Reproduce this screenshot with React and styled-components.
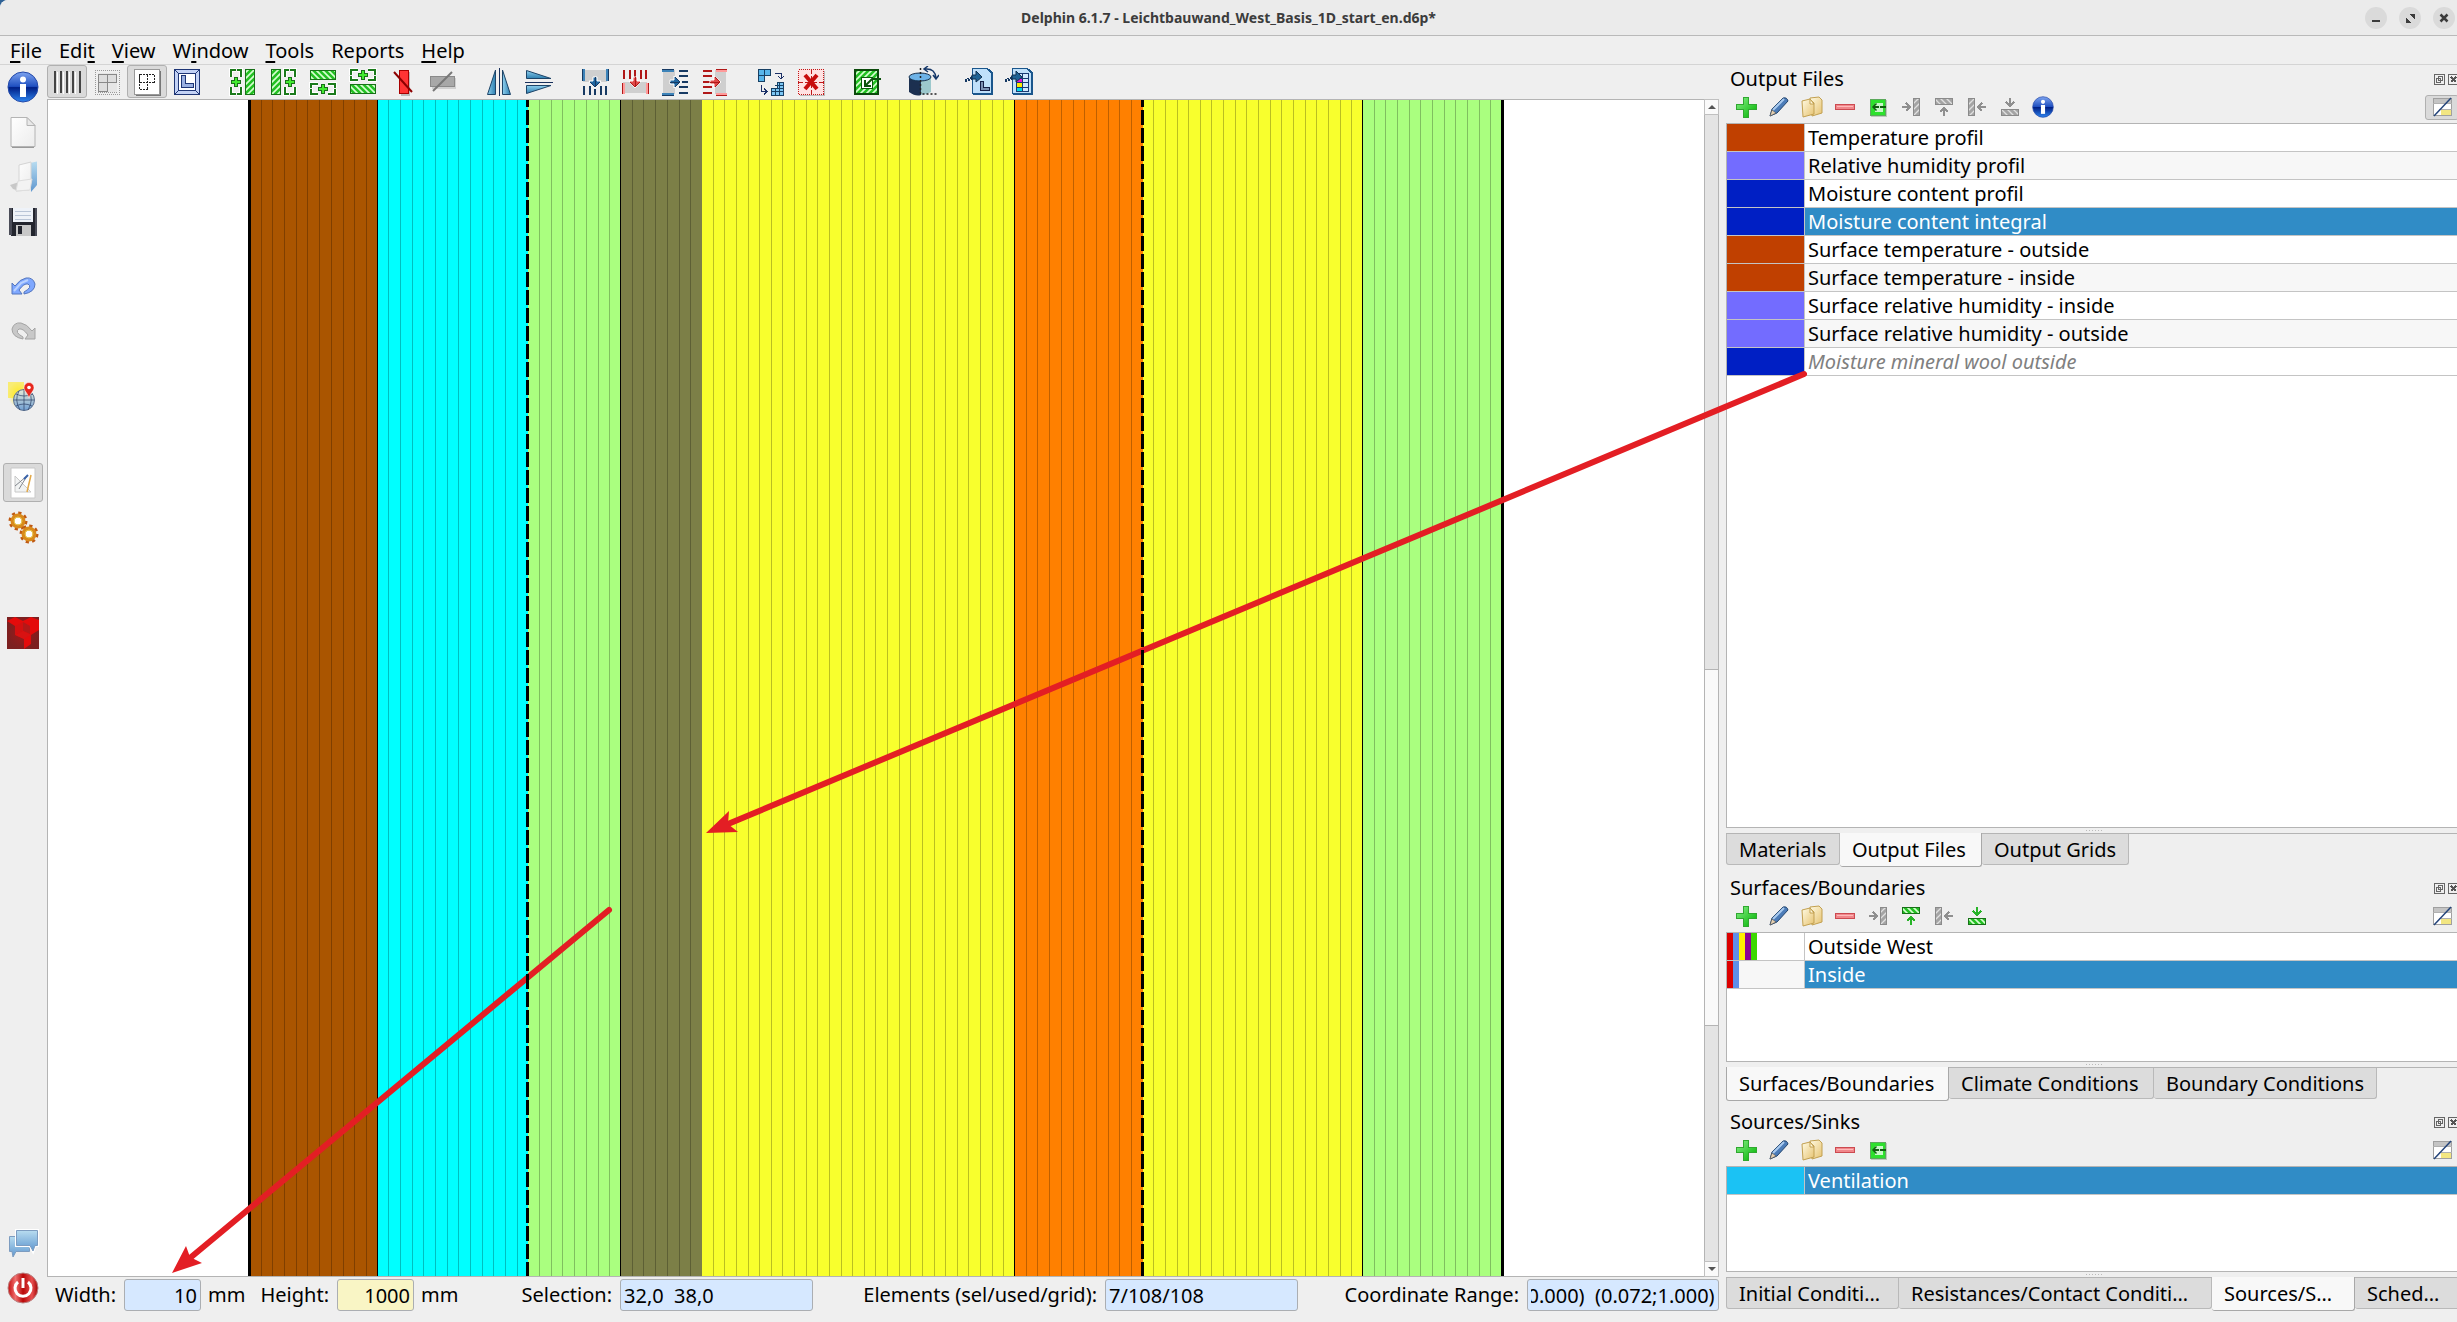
import React, { useEffect, useRef, useState } from 'react';
import styled, { createGlobalStyle, css } from 'styled-components';

const GlobalStyle = createGlobalStyle`
  * {
    box-sizing: border-box;
  }

  body {
    margin: 0;
    background: #2f6296;
    overflow: hidden;
  }

  body, button, input {
    font-family: "Noto Sans", "Open Sans", sans-serif;
    font-size: 20px;
    line-height: 26px;
    color: #000;
  }
`;

const Window = styled.div`
  position: relative;
  display: flex;
  flex-direction: column;
  height: 100vh;
  background: #efefef;
  border-top-left-radius: 8px;
  overflow: hidden;
`;

const TitleBar = styled.header`
  display: grid;
  grid-template-columns: 1fr auto 1fr;
  align-items: center;
  height: 36px;
  background: #ebebeb;
  border-bottom: 1px solid #b9b9b9;
`;

const Title = styled.h1`
  grid-column: 2;
  margin: 0;
  font-size: 14px;
  font-weight: 700;
  color: #3c3c3c;
`;

const WindowButtons = styled.div`
  display: flex;
  justify-content: flex-end;
  gap: 12px;
  padding-right: 2px;
`;

const WindowButton = styled.button`
  display: flex;
  width: 22px;
  height: 22px;
  padding: 0;
  border: 0;
  border-radius: 50%;
  background: #dadada;
`;

const MenuBar = styled.nav`
  display: flex;
  gap: 17px;
  height: 29px;
  padding: 1px 10px 0;
  border-bottom: 1px solid #d4d4d4;
`;

const MenuItem = styled.button`
  padding: 0;
  border: 0;
  background: none;

  u {
    text-decoration-thickness: 2px;
    text-underline-offset: 3px;
  }
`;

const Body = styled.div`
  display: grid;
  grid-template-columns: 47px minmax(0, 1fr) 731px;
  flex: 1;
  min-height: 0;
`;

const SideBar = styled.aside`
  display: flex;
  flex-direction: column;
  align-items: center;
  gap: 6px;
  padding: 2px 2px 15px 0;
`;

const Gap = styled.div`
  height: ${props => props.$size}px;
`;

const Spring = styled.div`
  flex: 1;
`;

const ToolButton = styled.button`
  display: flex;
  flex: none;
  align-items: center;
  justify-content: center;
  width: ${props => props.$width || 40}px;
  height: ${props => props.$height || 33}px;
  padding: 0;
  border: 1px solid transparent;
  border-radius: 3px;
  background: none;

  ${props => props.$pressed && css`
    border-color: #b0b0b0;
    background: #dadada;
  `}
`;

const Center = styled.main`
  display: flex;
  flex-direction: column;
  min-width: 0;
`;

const ToolBar = styled.div`
  display: flex;
  height: 34px;
`;

const ToolGap = styled.div`
  width: 16px;
`;

const Viewport = styled.div`
  display: flex;
  flex: 1;
  min-height: 0;
  margin-right: 7px;
  border: 1px solid #b4b4b4;
  background: #fff;
`;

const Construction = styled.div`
  display: flex;
  flex: 1;
  padding: 0 202px;
`;

const Layer = styled.div`
  position: relative;
  display: flex;
  flex: ${props => props.$cells} 0 0;
  background: ${props => props.$color};
  box-shadow: ${props => (props.$edge === 'solid' ? 'inset -1px 0 #000' : 'none')};

  &:first-child {
    box-shadow: -2px 0 #000, inset -1px 0 #000, inset 1px 0 #000;
  }

  &:last-child {
    box-shadow: 2px 0 #000, inset -1px 0 #000;
  }

  ${props => props.$edge === 'dashed' && css`
    &::after {
      content: '';
      position: absolute;
      z-index: 1;
      top: 0;
      bottom: 0;
      right: -1px;
      width: 3px;
      background: repeating-linear-gradient(#000 0 7px, transparent 7px 10px, #000 10px 18px);
    }
  `}
`;

const Cell = styled.div`
  flex: 1;

  & + & {
    border-left: 1px solid rgba(0, 0, 0, 0.25);
  }
`;

const ScrollBar = styled.div`
  display: flex;
  flex-direction: column;
  width: 14px;
  border-left: 1px solid #b4b4b4;
  background: #e4e4e4;
`;

const ScrollButton = styled.button`
  display: flex;
  align-items: center;
  justify-content: center;
  height: 14px;
  padding: 0;
  border: 0;
  background: #fafafa;
  box-shadow: 0 0 0 1px #c0c0c0;
`;

const ScrollTrack = styled.div`
  display: grid;
  grid-template-rows: 555fr 357fr 236fr;
  flex: 1;
`;

const ScrollThumb = styled.div`
  grid-row: 2;
  border: solid #b4b4b4;
  border-width: 1px 0;
  background: #f9f9f9;
`;

const StatusBar = styled.footer`
  display: flex;
  height: 45px;
  padding: 2px 7px 0 0;
`;

const StatusLabel = styled.label`
  width: ${props => props.$width}px;
  padding-right: 8px;
  line-height: 32px;
  text-align: right;
  white-space: nowrap;
`;

const Unit = styled.span`
  width: 42px;
  padding-left: 7px;
  line-height: 32px;
`;

const Field = styled.input`
  width: ${props => props.$width}px;
  height: 32px;
  padding: 1px 3px 0;
  border: 1px solid #abaeb2;
  border-radius: 3px;
  outline: 0;
  background: ${props => (props.$yellow ? '#f9f5c5' : '#d6e8ff')};
  text-align: ${props => (props.$end ? 'right' : 'left')};
`;

const Docks = styled.aside`
  display: flex;
  flex-direction: column;
  gap: 8px;
  margin-right: -5px;
  padding-bottom: 12px;
`;

const Dock = styled.section`
  display: flex;
  flex-direction: column;
  flex: ${props => (props.$grow ? 1 : 'none')};
`;

const DockTitle = styled.div`
  display: flex;
  align-items: center;
  height: 28px;
  padding: 0 3px 0 4px;

  h2 {
    flex: 1;
    margin: 0;
    font-size: 20px;
    font-weight: 400;
  }
`;

const DockControl = styled.button`
  display: flex;
  width: 11px;
  height: 11px;
  margin-left: 3px;
  padding: 0;
  border: 0;
  background: none;
`;

const DockTools = styled.div`
  display: flex;
  align-items: center;
  height: 30px;
  padding: 0 3px 2px 3px;
`;

const ListBox = styled.div`
  flex: 1;
  min-height: ${props => props.$height}px;
  border: 1px solid #b4b4b4;
  background: #fff;
`;

const List = styled.table`
  width: 100%;
  border-spacing: 0;
  table-layout: fixed;
`;

const Swatch = styled.td`
  width: 78px;
  height: 28px;
  padding: 0;
  border-right: 1px solid #c4c4c4;
  border-bottom: 1px solid #c4c4c4;
  background: ${props => props.$color};
`;

const Stripes = styled.div`
  display: flex;
  height: 27px;
`;

const Stripe = styled.i`
  width: 6px;
  background: ${props => props.$color};
`;

const Name = styled.td`
  padding: 1px 3px 0;
  border-bottom: 1px solid #c4c4c4;
  background: ${props => (props.$alt ? '#f7f7f7' : '#fff')};
  line-height: 26px;
  white-space: nowrap;

  ${props => props.$selected && css`
    background: #308cc6;
    color: #fff;
  `}

  ${props => props.$inactive && css`
    color: #808080;
    font-style: italic;
  `}
`;

const Handle = styled.div`
  width: 17px;
  height: 1px;
  margin: 2px auto;
  background: repeating-linear-gradient(90deg, #bbb 0 1px, transparent 1px 3px);
`;

const Tabs = styled.div`
  display: flex;
  align-items: flex-start;
  height: 33px;
  border-top: 1px solid #b4b4b4;
`;

const Tab = styled.button`
  flex: none;
  width: ${props => props.$width}px;
  height: 31px;
  padding: 1px 0 0 12px;
  border: 1px solid #b9b9b9;
  border-top: 0;
  border-radius: 0 0 3px 3px;
  background: #dcdcdc;
  text-align: left;
  white-space: nowrap;

  & + & {
    border-left-width: 0;
  }

  ${props => props.$selected && css`
    height: 34px;
    margin-top: -1px;
    background: #f8f8f8;
    border-color: #a8a8a8;
  `}
`;

const Annotations = styled.svg`
  position: absolute;
  inset: 0;
  width: 100%;
  height: 100%;
  pointer-events: none;
`;

const Icon = ({ size = 28, box = 28, smooth, children }) => (
  <svg
    width={size}
    height={size}
    viewBox={`0 0 ${box} ${box}`}
    fill="none"
    shapeRendering={smooth ? 'auto' : 'crispEdges'}
    aria-hidden="true"
  >
    {children}
  </svg>
);

const DefsHolder = styled.svg`
  position: absolute;
`;

const SharedDefs = () => (
  <DefsHolder width="0" height="0" aria-hidden="true">
    <defs>
      <pattern id="hatch" width="6" height="6" patternUnits="userSpaceOnUse">
        <rect width="6" height="6" fill="#22c022" />
        <path d="M-1 4L4 -1M2 7L7 2" stroke="#d6ffd0" strokeWidth="1.6" shapeRendering="auto" />
      </pattern>
      <pattern id="hatchGrey" width="6" height="6" patternUnits="userSpaceOnUse">
        <rect width="6" height="6" fill="#a4a4a4" />
        <path d="M-1 4L4 -1M2 7L7 2" stroke="#e0e0e0" strokeWidth="1.3" />
      </pattern>
      <linearGradient id="blueOrb" x1="0" y1="0" x2="0" y2="1">
        <stop offset="0" stopColor="#7ea4f0" />
        <stop offset="0.48" stopColor="#1f4fc0" />
        <stop offset="0.52" stopColor="#001f86" />
        <stop offset="1" stopColor="#2e86f0" />
      </linearGradient>
      <linearGradient id="redOrb" x1="0" y1="0" x2="1" y2="0">
        <stop offset="0" stopColor="#c40c0c" />
        <stop offset="0.25" stopColor="#f07070" />
        <stop offset="0.5" stopColor="#b80808" />
        <stop offset="0.8" stopColor="#e85050" />
        <stop offset="1" stopColor="#a00000" />
      </linearGradient>
      <linearGradient id="sky" x1="0" y1="0" x2="0" y2="1">
        <stop offset="0" stopColor="#b8dcf0" />
        <stop offset="1" stopColor="#5f97cf" />
      </linearGradient>
      <linearGradient id="steel" x1="0" y1="0" x2="1" y2="0">
        <stop offset="0" stopColor="#8fd0ee" />
        <stop offset="1" stopColor="#2d7fb0" />
      </linearGradient>
      <linearGradient id="paper" x1="0" y1="0" x2="1" y2="1">
        <stop offset="0" stopColor="#fff" />
        <stop offset="1" stopColor="#ececec" />
      </linearGradient>
      <linearGradient id="folder" x1="0" y1="0" x2="1" y2="1">
        <stop offset="0" stopColor="#fffbe4" />
        <stop offset="1" stopColor="#e6c270" />
      </linearGradient>
      <linearGradient id="green" x1="0" y1="0" x2="1" y2="1">
        <stop offset="0" stopColor="#8cf08c" />
        <stop offset="1" stopColor="#00b400" />
      </linearGradient>
      <linearGradient id="globe" x1="0" y1="0" x2="0" y2="1">
        <stop offset="0" stopColor="#e8ecd8" />
        <stop offset="1" stopColor="#6f9fd4" />
      </linearGradient>
      <radialGradient id="sun">
        <stop offset="0" stopColor="#ffe920" />
        <stop offset="1" stopColor="#ffe920" stopOpacity="0" />
      </radialGradient>
      <radialGradient id="brand">
        <stop offset="0" stopColor="#a01818" />
        <stop offset="1" stopColor="#7c2020" />
      </radialGradient>
    </defs>
  </DefsHolder>
);

// --- side bar icons, 32 x 32 ---

const InfoIcon = ({ size = 32 }) => (
  <Icon size={size} box={32} smooth>
    <circle cx="16" cy="16" r="15" fill="url(#blueOrb)" stroke="#2348a8" />
    <circle cx="16" cy="8.5" r="3" fill="#fff" />
    <path d="M13 13h6v13h-6z" fill="#fff" />
  </Icon>
);

const NewIcon = () => (
  <Icon size={32} box={32} smooth>
    <path d="M4 1.500H20L28 9.500V30.500H4Z" fill="url(#paper)" stroke="#b4b4b4" />
    <path d="M20 1.500V9.500H28Z" fill="#e8e8e8" stroke="#b4b4b4" />
    <path d="M5 31.500H27" stroke="#999" />
  </Icon>
);

const OpenIcon = () => (
  <Icon size={32} box={32} smooth>
    <path d="M3 24L12 21V30L6 28Z" fill="#c8c8c8" />
    <path d="M23 2L30 0.500V24L24 31Z" fill="url(#sky)" />
    <path d="M12 4L24 1V19L22 29L9 30L12 20Z" fill="url(#paper)" stroke="#d4d4d4" />
    <path d="M9 30L11 20L25 18L23 29Z" fill="#f3f3f3" stroke="#ddd" />
  </Icon>
);

const SaveIcon = () => (
  <Icon size={32} box={32}>
    <path d="M2 2H30V30H4L2 28Z" fill="#23252e" />
    <path d="M2 2H5V29H2ZM28 2H30V30H28Z" fill="#4a4c58" />
    <path d="M6 2H26V16H6Z" fill="#eef2f8" />
    <path d="M8 5H24M8 9H24M8 13H24" stroke="#b8c4d6" />
    <path d="M9 19H24V30H9Z" fill="#c8c8c8" />
    <path d="M11 20H15V28H11Z" fill="#23252e" />
  </Icon>
);

const UndoIcon = () => (
  <Icon size={32} box={32} smooth>
    <path
      d="M5 12V23H15L12 19Q17 12 21 13Q26 16 17 21V23Q28 21 28 13Q26 6 19 7Q13 8 8 15Z"
      fill="#7fa8ff"
      stroke="#5576bd"
    />
    <path d="M7 20L14 12L21 9" stroke="#b9d2ff" strokeWidth="2" />
  </Icon>
);

const RedoIcon = () => (
  <Icon size={32} box={32} smooth>
    <path
      d="M28 12V23H18L21 19Q16 12 12 13Q7 16 16 21V23Q5 21 5 13Q7 6 14 7Q20 8 25 15Z"
      fill="#c8c8c8"
      stroke="#a4a4a4"
    />
  </Icon>
);

const ClimateIcon = () => (
  <Icon size={32} box={32} smooth>
    <path d="M1 1H22V27H1Z" fill="url(#sun)" />
    <path d="M1 1H17V17H1Z" fill="#ffe920" opacity="0.6" />
    <circle cx="17" cy="19" r="10.500" fill="url(#globe)" stroke="#5b6f8e" />
    <path
      d="M7 19H27M9 13Q17 17 26 13M9 25Q17 21 25 25M17 8.500V29.500M12 10Q7 19 13 29M22 10Q27 19 21 29"
      stroke="#2b3f66"
      strokeWidth="0.700"
    />
    <path d="M22 17C20 11 17 10 17 6.500A5 5 0 0 1 27 6.500C27 10 24 11 22 17Z" fill="#e6281e" stroke="#fff" strokeWidth="0.500" />
    <circle cx="22" cy="6.500" r="1.800" fill="#fff" />
  </Icon>
);

const DesignIcon = () => (
  <Icon size={32} box={32} smooth>
    <path d="M4 1H28V31H4Z" fill="#fff" stroke="#c9c9c9" />
    <path d="M8 9V25H24Z" fill="#f1f3f3" stroke="#c8c8c8" />
    <path d="M8 19L20 9M12 22L20 9" stroke="#80858c" />
    <path d="M17 12L21 8" stroke="#3b64aa" strokeWidth="2" />
    <path d="M24 8L20 25" stroke="#e2a848" strokeWidth="1.500" />
  </Icon>
);

const GearsIcon = () => (
  <Icon size={34} box={34} smooth>
    {[[12, 10], [23, 23]].map(([x, y]) => (
      <g key={x}>
        <circle cx={x} cy={y} r="8" stroke="#bf5a14" strokeWidth="3" strokeDasharray="3.140 3.140" />
        <circle cx={x} cy={y} r="5.500" fill="#fff" stroke="#d98a1c" strokeWidth="4" />
        <circle cx={x} cy={y} r="4" stroke="#e8c850" />
      </g>
    ))}
  </Icon>
);

const BrandIcon = () => (
  <Icon size={32} box={32} smooth>
    <path d="M0 0H32V32H0Z" fill="url(#brand)" />
    <path d="M0 4L8 0L16 4L24 0L32 3V13L24 18V27L17 32V22L8 18V9Z" fill="#e40b0b" />
    <path d="M8 9L16 5V15L8 18Z" fill="#d41010" />
    <path d="M16 5L23 9V17L16 14Z" fill="#b41818" />
    <path d="M9 18L16 14L24 18L17 22Z" fill="#d81212" />
  </Icon>
);

const ChatIcon = () => (
  <Icon size={32} box={32} smooth>
    <path d="M2.500 9.500H22.500V24.500H9L6 30L5 24.500H2.500Z" fill="url(#sky)" stroke="#7d9cc0" />
    <path d="M9.500 3.500H30.500V18.500H28L26 24L23 18.500H9.500Z" fill="url(#sky)" stroke="#fff" strokeWidth="3" />
    <path d="M9.500 3.500H30.500V18.500H28L26 24L23 18.500H9.500Z" fill="url(#sky)" stroke="#7d9cc0" />
  </Icon>
);

const PowerIcon = () => (
  <Icon size={32} box={32} smooth>
    <circle cx="16" cy="16" r="15" fill="url(#redOrb)" stroke="#b98080" />
    <path d="M11 10A8 8 0 1 0 21 10" stroke="#fff" strokeWidth="3" />
    <path d="M16 6V16" stroke="#fff" strokeWidth="3" />
  </Icon>
);

// --- geometry tool bar icons, 28 x 28 ---

const GridIcon = () => (
  <Icon>
    <path d="M2 3V25M8 3V25M14 3V25M20 3V25M27 3V25" stroke="#444" strokeWidth="2" />
    <path d="M4 4V26M10 4V26M16 4V26M22 4V26" stroke="#fff" />
  </Icon>
);

const CellsIcon = () => (
  <Icon>
    <path d="M2 2.500H27M2 26.500H27M2.500 2V27M26.500 2V27M5 5.500H25M5 24.500H25" stroke="#999" strokeDasharray="1 1" />
    <path d="M5 5H24V24H5Z" fill="#e6e6e6" />
    <path d="M5.500 6.500H14.500V14.500H5.500ZM14.500 6.500H23.500V14.500H14.500ZM5.500 14.500H14.500V23.500H5.500Z" fill="#ddd" stroke="#888" />
  </Icon>
);

const SelectionIcon = () => (
  <Icon>
    <path d="M3 3H28V28H3Z" fill="#777" />
    <path d="M1.500 1.500H26.500V26.500H1.500Z" fill="#fff" stroke="#999" />
    <path d="M6.500 6.500H21.500V14.500H6.500ZM14.500 6.500V21.500H6.500V6.500" stroke="#222" strokeDasharray="2 1" />
  </Icon>
);

const DetailIcon = () => (
  <Icon>
    <path d="M1.500 1.500H26.500V26.500H1.500Z" fill="#c3d2f5" stroke="#1e3575" />
    <path d="M5.500 5.500H22.500V22.500H5.500Z" fill="#fff" stroke="#1e3575" />
    <path d="M1 1L5 5M27 1L23 5M1 27L5 23M27 27L23 23" stroke="#1e3575" />
    <path d="M8.500 7.500H12.500V15.500H20.500V19.500H8.500Z" fill="#9ab0e0" stroke="#1e3575" />
  </Icon>
);

const insertTurns = { left: 0, right: 180, above: 270, below: 90 };

const InsertIcon = ({ side }) => (
  <Icon>
    <g transform={`rotate(${insertTurns[side]} 14 14)`}>
      <path d="M16.500 1.500H25.500V26.500H16.500Z" fill="url(#hatch)" stroke="#187018" />
      <path d="M7 2H2V9M8 2H12V9M2 19V26H7M12 19V26H8" stroke="#fff" strokeWidth="4" />
      <path d="M7 2H2V9M8 2H12V9M2 19V26H7M12 19V26H8" stroke="#1b7a1b" strokeWidth="2" />
      <path d="M7 9V19M2 14H12" stroke="#187018" strokeWidth="4" />
      <path d="M7 10V18M3 14H11" stroke="#42ea30" strokeWidth="2" />
    </g>
  </Icon>
);

const RemoveColumnIcon = () => (
  <Icon>
    <path d="M12 4H21V28H12Z" fill="#bbb" />
    <path d="M10.500 2.500H19.500V25.500H10.500Z" fill="#ff3434" stroke="#a80000" />
    <path d="M5 4L23 24" stroke="#8c0000" strokeWidth="2" shapeRendering="auto" />
  </Icon>
);

const RemoveRowIcon = () => (
  <Icon>
    <path d="M3 10H27V21H3Z" fill="#d0d0d0" />
    <path d="M1.500 8.500H25.500V18.500H1.500Z" fill="#a8a8a8" stroke="#8a8a8a" />
    <path d="M4 23L23 4" stroke="#777" strokeWidth="2" shapeRendering="auto" />
  </Icon>
);

const FlipIcon = ({ turn = 0 }) => (
  <Icon>
    <g transform={`rotate(${turn} 14 14)`}>
      <path d="M10.500 2V26.500H2.500Z" fill="url(#steel)" stroke="#1d4468" shapeRendering="auto" />
      <path d="M17.500 2V26.500H25.500Z" fill="url(#steel)" stroke="#1d4468" shapeRendering="auto" />
      <path d="M14.500 0V28" stroke="#18305c" />
    </g>
  </Icon>
);

const SplitIcon = ({ color = '#173a63', light = '#3d83b8', arrow = '#1f66a0', turn = 0, down }) => (
  <Icon>
    <g transform={`rotate(${turn} 14 14)`}>
      <path d={down ? 'M2 14H26V25H2Z' : 'M2 2H26V14H2Z'} fill="#cfcfcf" />
      <path d={down ? 'M3 2V11M9 2V11M14 2V11M20 2V11M25 2V11' : 'M3 18V27M9 18V27M14 21V27M20 18V27M25 18V27'} stroke={color} strokeWidth="2" />
      <path d={down ? 'M2 15V26M26 15V26' : 'M2 1V13M26 1V13'} stroke={light} strokeWidth="3" />
      <path d={down ? 'M1 15V26M27 15V26' : 'M1 1V13M27 1V13'} stroke={color} />
      <path d="M12 9H16V13H20L14 20L8 13H12Z" fill={arrow} stroke="#fff" shapeRendering="auto" />
      <path d="M14 9V19M9 14L14 19L19 14" stroke={color} />
    </g>
  </Icon>
);

const RefineIcon = () => (
  <Icon>
    <path d="M1.500 1.500H13.500V7.500H7.500V13.500H1.500Z" fill="#58b5ea" stroke="#174064" />
    <path d="M7.500 1.500V7.500H1.500" stroke="#174064" />
    <path d="M14.500 20.500H20.500V14.500H26.500V27H14.500Z" fill="#7bc6f4" stroke="#174064" />
    <path d="M14 23.500H27M18 17.500H27M20.500 20.500H27M18.500 20V27M22.500 14V27" stroke="#174064" />
    <path d="M18 5.500H24V11M21 8L24 11L27 8M4 17V23.500H10M7 20.500L10 23.500L7 26.500" stroke="#1b2f66" />
  </Icon>
);

const DeleteSelectionIcon = () => (
  <Icon>
    <path d="M3 3H28V28H3Z" fill="#bbb" />
    <path d="M1 1H27V27H1Z" fill="#ffe2e2" />
    <path d="M1.500 1.500H26.500V26.500H1.500Z" stroke="#c01818" strokeDasharray="1 1" />
    <path d="M14.500 1V27M1 14.500H27" stroke="#c01818" strokeDasharray="5 2" />
    <path d="M8 7L20 21M20 7L8 21" stroke="#c80c0c" strokeWidth="4" shapeRendering="auto" />
  </Icon>
);

const AssignIcon = () => (
  <Icon>
    <path d="M2 2H25V26H2Z" fill="url(#hatch)" stroke="#0b4a0b" strokeWidth="2" />
    <path d="M8 9H19V20H8Z" fill="#fff" stroke="#0b5c0b" />
    <path d="M28 11H19L12 18M12 12V18H18" stroke="#0c540c" strokeWidth="2" shapeRendering="auto" />
  </Icon>
);

const RotationIcon = () => (
  <Icon size={32} box={32} smooth>
    <path d="M2 12V26Q9 31 14 29V11Z" fill="#1c3050" />
    <path d="M14 11H24V26Q19 29 14 29Z" fill="#9cc8cc" />
    <ellipse cx="13" cy="11" rx="11" ry="4" fill="#6db2e6" stroke="#17304c" />
    <path d="M13.500 2V28H31" stroke="#222" strokeWidth="1.500" strokeDasharray="2 2" />
    <path d="M18 3Q28 2 29 12M21 0L17 3L21 6M26 9L29 13L32 9" stroke="#17396a" strokeWidth="1.500" />
  </Icon>
);

const CopyToIcon = ({ table }) => (
  <Icon size={30} box={30}>
    <path d="M9 2H25L29 6V28H9Z" fill="#1a568c" />
    <path d="M8.500 1.500H23L27.500 6V26.500H8.500Z" fill="#bfe0fa" stroke="#1a568c" />
    {table ? (
      <>
        <path d="M12.500 6.500H24.500V24.500H12.500Z" fill="#cfe8fc" stroke="#173a70" />
        <path d="M13 11H18V16H13Z" fill="#e815d8" />
        <path d="M13 16H18V20H13Z" fill="#ffe800" />
        <path d="M13 20H18V24H13Z" fill="#00d8e8" />
        <path d="M12 11.500H25M12 15.500H25M12 20.500H25M18.500 6V25" stroke="#173a70" />
      </>
    ) : (
      <path d="M16.500 14.500H19.500V20.500H25.500V23.500H16.500Z" fill="#7d92b4" stroke="#141e44" />
    )}
    <path d="M1 14L10 10" stroke="#173a63" strokeWidth="3" strokeDasharray="2 1" />
    <path d="M8 8H12V4L18 10L12 15V12H8Z" fill="#1e6294" stroke="#103050" shapeRendering="auto" />
  </Icon>
);

// --- dock tool bar icons, 22 x 22 ---

const AddIcon = () => (
  <Icon size={22} box={22}>
    <path d="M8 1H13V8H21V13H13V21H8V13H1V8H8Z" fill="url(#green)" stroke="#2fa82f" />
  </Icon>
);

const EditIcon = () => (
  <Icon size={22} box={22} smooth>
    <path d="M2 20L4 13L15 2Q19 1 20 5L9 17Z" fill="#4c7cb8" stroke="#25466e" />
    <path d="M5 14L16 3" stroke="#a9caee" strokeWidth="2" />
    <path d="M2 20L4 14L8 17Z" fill="#e6d0b0" stroke="#444" strokeWidth="0.500" />
  </Icon>
);

const DuplicateIcon = () => (
  <Icon size={22} box={22} smooth>
    <path d="M9 2L18 1L21 4V17L11 20Z" fill="url(#folder)" stroke="#c2a050" />
    <path d="M1 5L9 3L13 7V18L2 21Z" fill="url(#folder)" stroke="#c2a050" />
    <path d="M9 3V8H13Z" fill="#fff8dc" stroke="#c2a050" />
  </Icon>
);

const DeleteIcon = () => (
  <Icon size={22} box={22}>
    <path d="M1.500 8.500H20.500V13.500H1.500Z" fill="#f0868a" stroke="#cc4a50" />
    <path d="M3 10.500H19" stroke="#ffb8b8" />
  </Icon>
);

const PickIcon = () => (
  <Icon size={22} box={22}>
    <path d="M4 4H20V21H4Z" fill="#bcc8bc" />
    <path d="M3 3H18V19H3Z" fill="#2de02d" stroke="#5ba95b" />
    <path d="M8 7H16V16H8Z" fill="#c9f7c9" />
    <path d="M9.500 7.500L6 11L9.500 14.500" stroke="#0f5f0f" strokeWidth="1.500" shapeRendering="auto" />
    <path d="M6 11H19" stroke="#0f5f0f" strokeWidth="2" strokeDasharray="6 1" />
  </Icon>
);

const EdgeIcon = ({ turn = 0, active }) => (
  <Icon size={22} box={22}>
    <g transform={`rotate(${turn} 11 11)`}>
      <path
        d="M13.500 2.500H19.500V19.500H13.500Z"
        fill={active ? 'url(#hatch)' : 'url(#hatchGrey)'}
        stroke={active ? '#187018' : '#8a8a8a'}
      />
      <path d="M2 11H10M6 7L10 11L6 15" stroke={active ? '#28b428' : '#8f8f8f'} strokeWidth="2" />
    </g>
  </Icon>
);

const TableViewIcon = () => (
  <Icon size={22} box={22}>
    <path d="M2.500 2.500H20.500V19.500H2.500Z" fill="#fff" stroke="#a0a0a0" />
    <path d="M3 3H20V7H3Z" fill="#c4c4c4" />
    <path d="M10 13H20V19H10Z" fill="#f2e682" />
    <path d="M2 7.500H21M8 13.500H21" stroke="#b0b0b0" />
    <path d="M3 20L20 2" stroke="#24447a" strokeWidth="1.500" shapeRendering="auto" />
  </Icon>
);

const dockIcons = {
  add: <AddIcon />,
  edit: <EditIcon />,
  duplicate: <DuplicateIcon />,
  delete: <DeleteIcon />,
  pick: <PickIcon />,
  left: <EdgeIcon />,
  top: <EdgeIcon turn={270} />,
  topActive: <EdgeIcon turn={270} active />,
  right: <EdgeIcon turn={180} />,
  bottom: <EdgeIcon turn={90} />,
  bottomActive: <EdgeIcon turn={90} active />,
  info: <InfoIcon size={22} />,
};

const menus = [
  ['', 'F', 'ile'],
  ['Edi', 't', ''],
  ['', 'V', 'iew'],
  ['W', 'i', 'ndow'],
  ['', 'T', 'ools'],
  ['Reports', '', ''],
  ['', 'H', 'elp'],
];

const sideTools = [
  ['Info', <InfoIcon />],
  ['New', <NewIcon />],
  ['Open', <OpenIcon />],
  ['Save', <SaveIcon />],
  14,
  ['Undo', <UndoIcon />],
  ['Redo', <RedoIcon />],
  14,
  ['Climate', <ClimateIcon />],
  35,
  ['Construction', <DesignIcon />, true],
  ['Simulation', <GearsIcon />],
  54,
  ['Post-processing', <BrandIcon />],
];

const geometryTools = [
  ['Equidistant view', <GridIcon />, true],
  ['Show grid', <CellsIcon />],
  ['Show selection', <SelectionIcon />, true],
  ['Zoom to detail', <DetailIcon />],
  null,
  ['Insert column left', <InsertIcon side="left" />],
  ['Insert column right', <InsertIcon side="right" />],
  ['Insert row above', <InsertIcon side="above" />],
  ['Insert row below', <InsertIcon side="below" />],
  ['Remove column', <RemoveColumnIcon />],
  ['Remove row', <RemoveRowIcon />],
  null,
  ['Flip horizontally', <FlipIcon />],
  ['Flip vertically', <FlipIcon turn={90} />],
  null,
  ['Split columns', <SplitIcon />],
  ['Merge columns', <SplitIcon down color="#b01818" light="#ff9a9a" arrow="#e04848" />],
  ['Split rows', <SplitIcon turn={270} />],
  ['Merge rows', <SplitIcon turn={270} down color="#b01818" light="#ff9a9a" arrow="#e04848" />],
  null,
  ['Refine grid', <RefineIcon />],
  ['Delete assignments', <DeleteSelectionIcon />],
  null,
  ['Assign material', <AssignIcon />],
  null,
  ['Rotational symmetry', <RotationIcon />],
  null,
  ['Copy geometry', <CopyToIcon />],
  ['Copy table', <CopyToIcon table />],
];

const layers = [
  { color: '#aa5500', cells: 11, edge: 'solid' },
  { color: '#00ffff', cells: 13, edge: 'dashed' },
  { color: '#aaff7f', cells: 8, edge: 'solid' },
  { color: '#7c7f47', cells: 7 },
  { color: '#f8ff2d', cells: 27, edge: 'solid' },
  { color: '#ff8000', cells: 11, edge: 'dashed' },
  { color: '#f8ff2d', cells: 19, edge: 'solid' },
  { color: '#aaff7f', cells: 12 },
];

const docks = [
  {
    title: 'Output Files',
    grow: true,
    height: 300,
    pressed: true,
    tools: ['add', 'edit', 'duplicate', 'delete', 'pick', 'left', 'top', 'right', 'bottom', 'info'],
    rows: [
      { name: 'Temperature profil', color: '#c04000' },
      { name: 'Relative humidity profil', color: '#736cff' },
      { name: 'Moisture content profil', color: '#001fc4' },
      { name: 'Moisture content integral', color: '#001fc4', selected: true },
      { name: 'Surface temperature - outside', color: '#c04000' },
      { name: 'Surface temperature - inside', color: '#c04000' },
      { name: 'Surface relative humidity - inside', color: '#736cff' },
      { name: 'Surface relative humidity - outside', color: '#736cff' },
      { name: 'Moisture mineral wool outside', color: '#001fc4', inactive: true },
    ],
    tabs: [['Materials', 114], ['Output Files', 142, true], ['Output Grids', 147]],
  },
  {
    title: 'Surfaces/Boundaries',
    height: 130,
    tools: ['add', 'edit', 'duplicate', 'delete', 'left', 'topActive', 'right', 'bottomActive'],
    rows: [
      { name: 'Outside West', stripes: ['#dc0000', '#5f8fe8', '#ffee00', '#8c0096', '#3cd800'] },
      { name: 'Inside', stripes: ['#dc0000', '#5f8fe8'], selected: true },
    ],
    tabs: [['Surfaces/Boundaries', 223, true], ['Climate Conditions', 205], ['Boundary Conditions', 223]],
  },
  {
    title: 'Sources/Sinks',
    height: 106,
    tools: ['add', 'edit', 'duplicate', 'delete', 'pick'],
    rows: [{ name: 'Ventilation', color: '#1bc2f4', selected: true }],
    tabs: [['Initial Conditi…', 173], ['Resistances/Contact Conditi…', 313], ['Sources/S…', 143, true], ['Sched…', 106]],
  },
];

const DockPanel = ({ dock }) => (
  <Dock $grow={dock.grow}>
    <DockTitle>
      <h2>{dock.title}</h2>
      <DockControl aria-label="Float">
        <Icon size={11} box={11}>
          <path d="M0.500 0.500H10.500V10.500H0.500ZM4.500 2.500H8.500V6.500H4.500ZM2.500 4.500H6.500V8.500H2.500Z" stroke="#666" />
        </Icon>
      </DockControl>
      <DockControl aria-label="Close">
        <Icon size={11} box={11}>
          <path d="M0.500 0.500H10.500V10.500H0.500Z" stroke="#666" />
          <path d="M3 3L8 8M8 3L3 8" stroke="#555" strokeWidth="2" />
        </Icon>
      </DockControl>
    </DockTitle>
    <DockTools>
      {dock.tools.map(tool => (
        <ToolButton key={tool} aria-label={tool} $width={33} $height={25}>{dockIcons[tool]}</ToolButton>
      ))}
      <Spring />
      <ToolButton aria-label="Toggle table view" $width={34} $height={25} $pressed={dock.pressed}>
        <TableViewIcon />
      </ToolButton>
    </DockTools>
    <ListBox $height={dock.height}>
      <List>
        <tbody>
          {dock.rows.map((row, i) => (
            <tr key={row.name}>
              <Swatch $color={row.color || (i % 2 ? '#f7f7f7' : '#fff')}>
                {row.stripes && (
                  <Stripes>{row.stripes.map(color => <Stripe key={color} $color={color} />)}</Stripes>
                )}
              </Swatch>
              <Name $alt={i % 2 === 1} $selected={row.selected} $inactive={row.inactive}>{row.name}</Name>
            </tr>
          ))}
        </tbody>
      </List>
    </ListBox>
    <Handle />
    <Tabs role="tablist">
      {dock.tabs.map(([label, width, selected]) => (
        <Tab key={label} role="tab" aria-selected={!!selected} $width={width} $selected={selected}>{label}</Tab>
      ))}
    </Tabs>
  </Dock>
);

const CoordinateField = () => {
  const [value, setValue] = useState('(0.060;0.000)  (0.072;1.000)');
  const field = useRef(null);

  // keep the end of the range in view
  useEffect(() => {
    field.current.scrollLeft = field.current.scrollWidth;
  }, []);

  return <Field id="range" ref={field} $width={192} value={value} onChange={e => setValue(e.target.value)} />;
};

const App = () => (
  <>
    <GlobalStyle />
    <SharedDefs />
    <Window>
      <TitleBar>
        <Title>Delphin 6.1.7 - Leichtbauwand_West_Basis_1D_start_en.d6p*</Title>
        <WindowButtons>
          <WindowButton aria-label="Minimize">
            <Icon size={22} box={22}><path d="M7 14H15" stroke="#3c3c3c" strokeWidth="2" /></Icon>
          </WindowButton>
          <WindowButton aria-label="Restore">
            <Icon size={22} box={22}>
              <path d="M11 7H15V11ZM7 11V15H11Z" fill="#3c3c3c" stroke="#3c3c3c" />
            </Icon>
          </WindowButton>
          <WindowButton aria-label="Close">
            <Icon size={22} box={22} smooth><path d="M7.500 7.500L14.500 14.500M14.500 7.500L7.500 14.500" stroke="#3c3c3c" strokeWidth="2.500" /></Icon>
          </WindowButton>
        </WindowButtons>
      </TitleBar>
      <MenuBar>
        {menus.map(([before, key, after]) => (
          <MenuItem key={before + key + after}>{before}<u>{key}</u>{after}</MenuItem>
        ))}
      </MenuBar>
      <Body>
        <SideBar>
          {sideTools.map((tool, i) => (typeof tool === 'number'
            ? <Gap key={i} $size={tool} />
            : <ToolButton key={tool[0]} aria-label={tool[0]} $height={39} $pressed={tool[2]}>{tool[1]}</ToolButton>
          ))}
          <Spring />
          <ToolButton aria-label="Feedback" $height={39}><ChatIcon /></ToolButton>
          <ToolButton aria-label="Quit" $height={39}><PowerIcon /></ToolButton>
        </SideBar>
        <Center>
          <ToolBar>
            {geometryTools.map((tool, i) => (tool
              ? <ToolButton key={tool[0]} aria-label={tool[0]} $pressed={tool[2]}>{tool[1]}</ToolButton>
              : <ToolGap key={i} />
            ))}
          </ToolBar>
          <Viewport>
            <Construction>
              {layers.map((layer, i) => (
                <Layer key={i} $color={layer.color} $cells={layer.cells} $edge={layer.edge}>
                  {Array.from({ length: layer.cells }, (_, n) => <Cell key={n} />)}
                </Layer>
              ))}
            </Construction>
            <ScrollBar>
              <ScrollButton aria-label="Scroll up">
                <Icon size={8} box={8} smooth><path d="M0 6H8L4 2Z" fill="#555" /></Icon>
              </ScrollButton>
              <ScrollTrack><ScrollThumb /></ScrollTrack>
              <ScrollButton aria-label="Scroll down">
                <Icon size={8} box={8} smooth><path d="M0 2H8L4 6Z" fill="#555" /></Icon>
              </ScrollButton>
            </ScrollBar>
          </Viewport>
          <StatusBar>
            <StatusLabel htmlFor="width" $width={77}>Width:</StatusLabel>
            <Field id="width" $width={77} $end defaultValue="10" />
            <Unit>mm</Unit>
            <StatusLabel htmlFor="height" $width={94}>Height:</StatusLabel>
            <Field id="height" $width={77} $end $yellow defaultValue="1000" />
            <Unit>mm</Unit>
            <StatusLabel htmlFor="selection" $width={164}>Selection:</StatusLabel>
            <Field id="selection" $width={193} defaultValue="32,0  38,0" />
            <StatusLabel htmlFor="elements" $width={292}>Elements (sel/used/grid):</StatusLabel>
            <Field id="elements" $width={193} defaultValue="7/108/108" />
            <Spring />
            <StatusLabel htmlFor="range" $width={220}>Coordinate Range:</StatusLabel>
            <CoordinateField />
          </StatusBar>
        </Center>
        <Docks>
          {docks.map(dock => <DockPanel key={dock.title} dock={dock} />)}
        </Docks>
      </Body>
      <Annotations aria-hidden="true">
        <g stroke="#e31e24" strokeWidth="6" strokeLinecap="round">
          <path d="M1804 374L728 824" />
          <path d="M609 910L190 1258" />
        </g>
        <g fill="#e31e24">
          <path d="M706 833L729 811L728 824L738 832Z" />
          <path d="M172 1273L186 1246L190 1257L202 1263Z" />
        </g>
      </Annotations>
    </Window>
  </>
);

export default App;
